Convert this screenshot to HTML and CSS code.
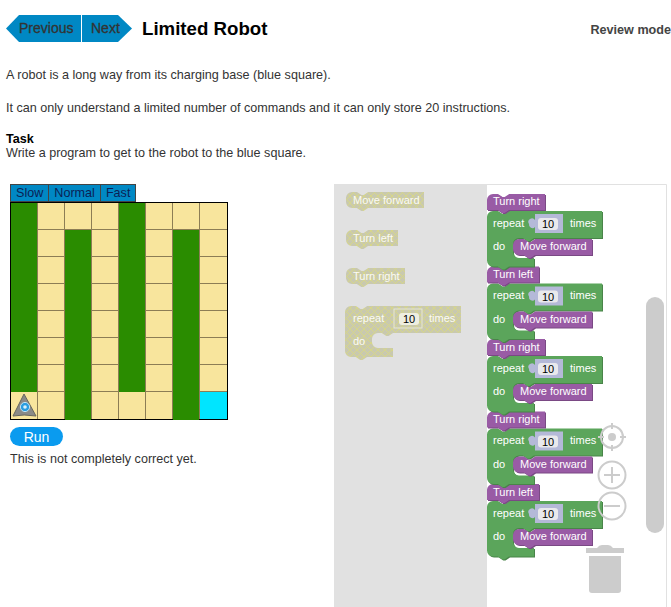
FILE: index.html
```html
<!DOCTYPE html>
<html lang="en">
<head>
  <meta charset="UTF-8">
  <title>Limited Robot</title>
  <link rel="stylesheet" href="styles.css">
</head>
<body>

  <header class="top_bar">
    <nav class="nav_arrows">
      <a class="nav_prev">Previous</a>
      <a class="nav_next">Next</a>
    </nav>
    <h1>Limited Robot</h1>
    <span class="review_mode">Review mode</span>
  </header>

  <div class="intro">
    <p>A robot is a long way from its charging base (blue square).</p>
    <p>It can only understand a limited number of commands and it can only store 20 instructions.</p>
    <p class="task_text"><b>Task</b><br>Write a program to get to the robot to the blue square.</p>
  </div>

  <div class="container">
    <div class="game">
      <div class="speed_tabs">
        <span>Slow</span><span>Normal</span><span>Fast</span>
      </div>
      <div class="board">
        <i class="g"></i><i></i><i></i><i></i><i class="g"></i><i></i><i></i><i></i>
        <i class="g"></i><i></i><i class="g"></i><i></i><i class="g"></i><i></i><i class="g"></i><i></i>
        <i class="g"></i><i></i><i class="g"></i><i></i><i class="g"></i><i></i><i class="g"></i><i></i>
        <i class="g"></i><i></i><i class="g"></i><i></i><i class="g"></i><i></i><i class="g"></i><i></i>
        <i class="g"></i><i></i><i class="g"></i><i></i><i class="g"></i><i></i><i class="g"></i><i></i>
        <i class="g"></i><i></i><i class="g"></i><i></i><i class="g"></i><i></i><i class="g"></i><i></i>
        <i class="g"></i><i></i><i class="g"></i><i></i><i class="g"></i><i></i><i class="g"></i><i></i>
        <i class="robot_cell">
          <svg width="26" height="26" viewBox="0 0 26 26">
            <path d="M13 2 L25 24 Q13 22 2 24 Z" fill="#8a8a88" stroke="#66665f" stroke-width="1" stroke-linejoin="round"/>
            <circle cx="14" cy="15" r="4.600" fill="#2a9de0" stroke="#bfe3f5" stroke-width="1"/>
            <circle cx="14" cy="15" r="1.800" fill="#d8f0fb"/>
          </svg>
        </i><i></i><i class="g"></i><i></i><i></i><i></i><i class="g"></i><i class="goal"></i>
      </div>
      <button class="run_btn" type="button">Run</button>
      <p class="result">This is not completely correct yet.</p>
    </div>

    <svg class="workspace" width="333" height="423" viewBox="334 184 333 423">
      <defs>
        <pattern id="disabled" width="7" height="7" patternUnits="userSpaceOnUse">
          <rect width="7" height="7" fill="#c9c9ae"/>
          <path d="M0 0 L7 7 M7 0 L0 7" stroke="#d6d68a" stroke-width="1"/>
        </pattern>

        <!-- one "turn" block plus its repeat block, origin is top left of the turn block -->
        <g id="repeat_green">
          <path class="b_green_d" transform="translate(1 1)" d="M0 23 A6 6 0 0 1 6 17 H11 l4.500 3 2.200 0 4.500 -3 H115 V44 H47 l-4.500 3 -2.200 0 -4.500 -3 H32 a6 6 0 0 0 -6 6 V58 a6 6 0 0 0 6 6 H47 V72.500 H22 l-4.500 3 -2.200 0 -4.500 -3 H6 a6 6 0 0 1 -6 -6 Z"/>
          <path class="b_green" d="M0 23 A6 6 0 0 1 6 17 H11 l4.500 3 2.200 0 4.500 -3 H115 V44 H47 l-4.500 3 -2.200 0 -4.500 -3 H32 a6 6 0 0 0 -6 6 V58 a6 6 0 0 0 6 6 H47 V72.500 H22 l-4.500 3 -2.200 0 -4.500 -3 H6 a6 6 0 0 1 -6 -6 Z"/>
          <text class="b_text" x="6" y="32.500">repeat</text>
          <text class="b_text" x="83" y="32.500">times</text>
          <text class="b_text" x="6" y="56">do</text>
          <path class="b_num" d="M48 20 H76 V39 H48 V33 a3.500 3.500 0 0 1 -6 -3 a3.500 3.500 0 0 1 6 -4 Z"/>
          <rect class="b_field" x="51" y="24" width="20" height="12" rx="3"/>
          <text class="b_num_text" x="61" y="34">10</text>
          <path class="b_purple_d" transform="translate(1 1)" d="M26 51 A6 6 0 0 1 32 45 H37 l4.500 3 2.200 0 4.500 -3 H105 V61 H48 l-4.500 3 -2.200 0 -4.500 -3 H32 a6 6 0 0 1 -6 -6 Z"/>
          <path class="b_purple" d="M26 51 A6 6 0 0 1 32 45 H37 l4.500 3 2.200 0 4.500 -3 H105 V61 H48 l-4.500 3 -2.200 0 -4.500 -3 H32 a6 6 0 0 1 -6 -6 Z"/>
          <text class="b_text" x="33" y="56">Move forward</text>
        </g>
      </defs>

      <rect x="334" y="184" width="333" height="423" fill="#fff"/>
      <rect x="334" y="184" width="153" height="423" fill="#e1e1e1"/>
      <path d="M487 184.500 H666.500 V607" fill="none" stroke="#e1e1e1"/>

      <!-- toolbox -->
      <g class="flyout">
        <path fill="url(#disabled)" d="M346 198 A6 6 0 0 1 352 192 H357 l4.500 3 2.200 0 4.500 -3 H424 V208 H368 l-4.500 3 -2.200 0 -4.500 -3 H352 a6 6 0 0 1 -6 -6 Z"/>
        <text class="f_text" x="353" y="204">Move forward</text>
        <path fill="url(#disabled)" d="M346 236 A6 6 0 0 1 352 230 H357 l4.500 3 2.200 0 4.500 -3 H398 V246 H368 l-4.500 3 -2.200 0 -4.500 -3 H352 a6 6 0 0 1 -6 -6 Z"/>
        <text class="f_text" x="353" y="242">Turn left</text>
        <path fill="url(#disabled)" d="M346 274 A6 6 0 0 1 352 268 H357 l4.500 3 2.200 0 4.500 -3 H405 V284 H368 l-4.500 3 -2.200 0 -4.500 -3 H352 a6 6 0 0 1 -6 -6 Z"/>
        <text class="f_text" x="353" y="280">Turn right</text>
        <path fill="url(#disabled)" d="M345 312 A6 6 0 0 1 351 306 H356 l4.500 3 2.200 0 4.500 -3 H461 V333 H393 l-4.500 3 -2.200 0 -4.500 -3 H378 a6 6 0 0 0 -6 6 V342 a6 6 0 0 0 6 6 H393 V357 H367 l-4.500 3 -2.200 0 -4.500 -3 H351 a6 6 0 0 1 -6 -6 Z"/>
        <text class="f_text" x="353" y="321.500">repeat</text>
        <text class="f_text" x="429" y="321.500">times</text>
        <text class="f_text" x="353" y="345">do</text>
        <rect x="394" y="309" width="28" height="19" fill="url(#disabled)" stroke="#e6e6d8"/>
        <rect class="f_field" x="399" y="313" width="20" height="12" rx="3"/>
        <text class="b_num_text" x="409" y="323">10</text>
      </g>

      <!-- program -->
      <g class="program">
        <use href="#repeat_green" x="487" y="484"/>
        <path class="b_purple_d" transform="translate(488 485)" d="M0 6 A6 6 0 0 1 6 0 H11 l4.500 3 2.200 0 4.500 -3 H52 V16 H22 l-4.500 3 -2.200 0 -4.500 -3 H0 Z"/>
        <path class="b_purple" transform="translate(487 484)" d="M0 6 A6 6 0 0 1 6 0 H11 l4.500 3 2.200 0 4.500 -3 H52 V16 H22 l-4.500 3 -2.200 0 -4.500 -3 H0 Z"/>
        <text class="b_text" x="493" y="495.500">Turn left</text>

        <use href="#repeat_green" x="487" y="411.500"/>
        <path class="b_purple_d" transform="translate(488 412.500)" d="M0 6 A6 6 0 0 1 6 0 H11 l4.500 3 2.200 0 4.500 -3 H58 V16 H22 l-4.500 3 -2.200 0 -4.500 -3 H0 Z"/>
        <path class="b_purple" transform="translate(487 411.500)" d="M0 6 A6 6 0 0 1 6 0 H11 l4.500 3 2.200 0 4.500 -3 H58 V16 H22 l-4.500 3 -2.200 0 -4.500 -3 H0 Z"/>
        <text class="b_text" x="493" y="423">Turn right</text>

        <use href="#repeat_green" x="487" y="339"/>
        <path class="b_purple_d" transform="translate(488 340)" d="M0 6 A6 6 0 0 1 6 0 H11 l4.500 3 2.200 0 4.500 -3 H58 V16 H22 l-4.500 3 -2.200 0 -4.500 -3 H0 Z"/>
        <path class="b_purple" transform="translate(487 339)" d="M0 6 A6 6 0 0 1 6 0 H11 l4.500 3 2.200 0 4.500 -3 H58 V16 H22 l-4.500 3 -2.200 0 -4.500 -3 H0 Z"/>
        <text class="b_text" x="493" y="350.500">Turn right</text>

        <use href="#repeat_green" x="487" y="266.500"/>
        <path class="b_purple_d" transform="translate(488 267.500)" d="M0 6 A6 6 0 0 1 6 0 H11 l4.500 3 2.200 0 4.500 -3 H52 V16 H22 l-4.500 3 -2.200 0 -4.500 -3 H0 Z"/>
        <path class="b_purple" transform="translate(487 266.500)" d="M0 6 A6 6 0 0 1 6 0 H11 l4.500 3 2.200 0 4.500 -3 H52 V16 H22 l-4.500 3 -2.200 0 -4.500 -3 H0 Z"/>
        <text class="b_text" x="493" y="278">Turn left</text>

        <use href="#repeat_green" x="487" y="194"/>
        <path class="b_purple_d" transform="translate(488 195)" d="M0 6 A6 6 0 0 1 6 0 H11 l4.500 3 2.200 0 4.500 -3 H58 V16 H22 l-4.500 3 -2.200 0 -4.500 -3 H0 Z"/>
        <path class="b_purple" transform="translate(487 194)" d="M0 6 A6 6 0 0 1 6 0 H11 l4.500 3 2.200 0 4.500 -3 H58 V16 H22 l-4.500 3 -2.200 0 -4.500 -3 H0 Z"/>
        <text class="b_text" x="493" y="205">Turn right</text>
      </g>

      <!-- scrollbar and controls -->
      <rect class="ctrl_fill" x="646" y="297" width="18" height="236" rx="9"/>
      <g class="ctrl">
        <circle cx="612" cy="437" r="11"/>
        <path d="M612 423 V429 M612 445 V451 M598 437 H604 M620 437 H626"/>
        <circle class="ctrl_fill" cx="612" cy="437" r="4" stroke="none"/>
        <circle cx="612" cy="475" r="13.500"/>
        <path d="M604 475 H620 M612 467 V483"/>
        <circle cx="612" cy="506" r="13.500"/>
        <path d="M604 506 H620"/>
      </g>
      <path class="ctrl_fill" d="M586 548 H597 Q599 545 602 545 H608 Q611 545 613 548 H624 V553 H586 Z M589 556 H621 V590 Q621 593 618 593 H592 Q589 593 589 590 Z"/>
    </svg>
  </div>

</body>
</html>
```

FILE: styles.css
```css
* {
  box-sizing: border-box;
  padding: 0;
  margin: 0;
}

html, body {
  height: 607px;
  overflow: hidden;
}

body {
  background-color: white;
  color: #333;
  font-family: "Liberation Sans", Arial, sans-serif;
  font-size: 12.6px;
  line-height: 14px;
}

.top_bar {
  display: flex;
  align-items: center;
  height: 27px;
  margin-top: 15px;
  padding-left: 6px;
}
.nav_arrows {
  display: flex;
  gap: 1px;
  margin-right: 10px;
}
.nav_arrows a {
  display: block;
  height: 27px;
  line-height: 27px;
  font-size: 14px;
  -webkit-text-stroke: 0.3px #333;
  color: #333;
  background-color: #0088c4;
}
.nav_prev {
  width: 75px;
  padding-left: 13px;
  clip-path: polygon(13px 0, 100% 0, 100% 100%, 13px 100%, 0 50%);
}
.nav_next {
  width: 50px;
  padding-left: 9px;
  clip-path: polygon(0 0, 36px 0, 100% 50%, 36px 100%, 0 100%);
}
.top_bar h1 {
  font-size: 18.67px;
  line-height: 27px;
  color: black;
}
.review_mode {
  margin-left: auto;
  padding-top: 2px;
  font-weight: bold;
  color: #444;
}

.intro {
  padding: 26px 0 0 6px;
}
.intro p {
  margin-bottom: 18px;
}
.intro p:nth-child(2) {
  padding-top: 1px;
  margin-bottom: 17px;
}
.intro .task_text {
  margin-bottom: 0;
}
.intro b {
  color: black;
}

.container {
  display: flex;
  margin-top: 24px;
}
.game {
  width: 324px;
  margin-left: 10px;
}
.speed_tabs {
  display: flex;
  height: 18px;
}
.speed_tabs span {
  padding: 0 5px;
  line-height: 16px;
  background-color: #0088c4;
  border: 1px solid #444;
  border-left-width: 0;
  color: #0b1f55;
}
.speed_tabs span:first-child {
  border-left-width: 1px;
}

.board {
  display: grid;
  grid-template-columns: repeat(7, 26px) 27px;
  grid-template-rows: repeat(7, 26px) 27px;
  gap: 1px;
  width: 218px;
  height: 218px;
  background-color: #8c7d55;
  border: 1px solid black;
}
.board i {
  display: block;
  background-color: #f8e59d;
}
.board .g {
  background-color: #2a8c00;
  box-shadow: 0 1px 0 #2a8c00;
}
.board .goal {
  background-color: #00e5ff;
}
.robot_cell svg {
  display: block;
}

.run_btn {
  display: block;
  width: 53px;
  height: 19px;
  margin-top: 7px;
  border: 0;
  border-radius: 10px;
  background-color: #0a9bef;
  color: white;
  font-family: inherit;
  font-size: 14px;
}
.result {
  margin-top: 6px;
}

.workspace {
  display: block;
  flex: none;
}
.workspace text {
  font-family: "Liberation Sans", Arial, sans-serif;
  font-size: 11px;
}
.b_green { fill: #5ba55b; }
.b_green_d { fill: #498449; }
.b_purple { fill: #995ba5; }
.b_purple_d { fill: #7a4984; }
.b_num { fill: #b4b9d8; }
.b_field { fill: #e9e9ec; }
.f_field { fill: #eeeee0; }
.b_text { fill: white; }
.f_text { fill: #fbfbf4; }
.b_num_text {
  fill: black;
  text-anchor: middle;
}
.ctrl {
  fill: none;
  stroke: #ccc;
  stroke-width: 2;
}
.ctrl_fill {
  fill: #ccc;
}
```
